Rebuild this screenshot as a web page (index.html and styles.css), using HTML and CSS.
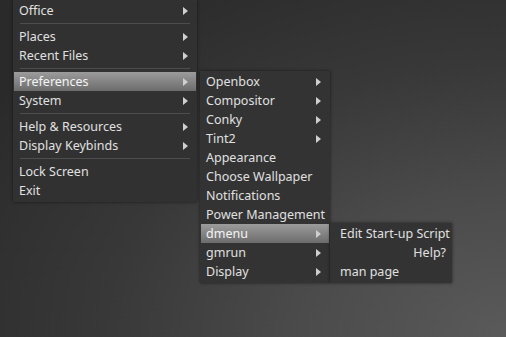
FILE: index.html
```html
<!DOCTYPE html>
<html lang="en">
<head>
    <meta charset="UTF-8">
    <meta name="viewport" content="width=device-width, initial-scale=1.0">
    <title>Openbox Menu</title>
    <link rel="stylesheet" href="styles.css">
</head>
<body>
    <div class="desktop">
        <div class="menu root-menu">
            <div class="item sub">Office</div>
            <div class="sep"></div>
            <div class="item sub">Places</div>
            <div class="item sub">Recent Files</div>
            <div class="sep"></div>
            <div class="item sub active">Preferences</div>
            <div class="item sub">System</div>
            <div class="sep"></div>
            <div class="item sub">Help &amp; Resources</div>
            <div class="item sub">Display Keybinds</div>
            <div class="sep"></div>
            <div class="item">Lock Screen</div>
            <div class="item">Exit</div>
        </div>

        <div class="menu prefs-menu">
            <div class="item sub">Openbox</div>
            <div class="item sub">Compositor</div>
            <div class="item sub">Conky</div>
            <div class="item sub">Tint2</div>
            <div class="item">Appearance</div>
            <div class="item">Choose Wallpaper</div>
            <div class="item">Notifications</div>
            <div class="item">Power Management</div>
            <div class="item sub active">dmenu</div>
            <div class="item sub">gmrun</div>
            <div class="item sub">Display</div>
        </div>

        <div class="menu dmenu-menu">
            <div class="item">Edit Start-up Script</div>
            <div class="item right">Help?</div>
            <div class="item">man page</div>
        </div>
    </div>
</body>
</html>
```

FILE: styles.css
```css
html, body {
    margin: 0;
    height: 100%;
}
body {
    font-family: "Noto Sans", "DejaVu Sans", sans-serif;
    font-size: 12.5px;
    color: #e0e0e0;
    overflow: hidden;
}
.desktop {
    position: relative;
    width: 506px;
    height: 337px;
    background: radial-gradient(ellipse 620px 420px at 100% 100%, #5a5a5a 0%, #4a4a4a 35%, #383838 65%, #2a2a2a 100%);
}
.menu {
    position: absolute;
    background-color: #313131;
    padding: 1px;
    box-shadow: 0 0 3px rgba(0, 0, 0, 0.55);
}
.root-menu {
    left: 13px;
    top: 0;
    width: 182px;
    padding-bottom: 2px;
}
.prefs-menu {
    left: 200px;
    top: 71px;
    width: 128px;
    background-color: #333;
    padding-bottom: 2px;
}
.dmenu-menu {
    left: 330px;
    top: 223px;
    width: 120px;
    background-color: #333;
    padding-bottom: 2px;
}
.item {
    height: 19px;
    line-height: 19px;
    padding: 0 8px 0 5px;
    display: flex;
    align-items: center;
    white-space: nowrap;
}
.dmenu-menu .item {
    padding: 0 5px 0 9px;
}
.item.right {
    justify-content: flex-end;
}
.item.sub::after {
    content: "";
    margin-left: auto;
    border-left: 5px solid #cfcfcf;
    border-top: 4px solid transparent;
    border-bottom: 4px solid transparent;
}
.item.active {
    background: linear-gradient(to bottom, #9c9c9c, #6c6c6c);
    color: #f4f4f4;
}
.sep {
    height: 7px;
    display: flex;
    align-items: center;
    padding: 0 6px;
}
.sep::before {
    content: "";
    flex: 1;
    border-top: 1px solid #4d4d4d;
}
```
